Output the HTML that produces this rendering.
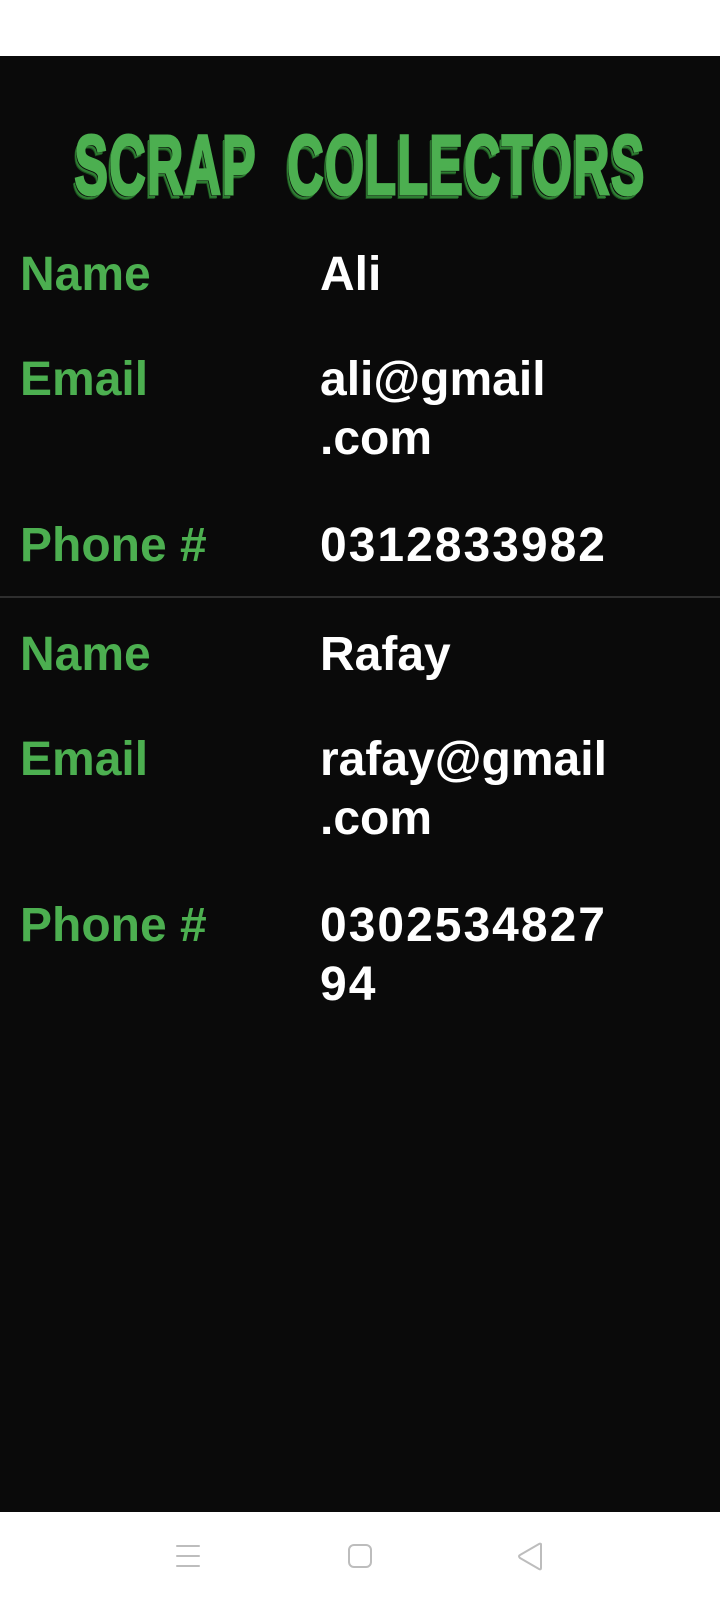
<!DOCTYPE html>
<html><head><meta charset="utf-8"><style>
*{margin:0;padding:0;box-sizing:border-box}
body{width:720px;height:1600px;background:#fff;position:relative;overflow:hidden;font-family:"Liberation Sans",sans-serif;font-weight:bold}
#main{position:absolute;left:0;top:56px;width:720px;height:1456px;background:#0a0a0a}
.t{position:absolute;font-size:48px;line-height:59px;white-space:nowrap}
.g{color:#4caf50;left:20px}
.w{color:#fff;left:320px}
.n{letter-spacing:2px}
#title{position:absolute;left:-300px;width:1320px;top:120px;text-align:center;font-size:84px;line-height:90px;white-space:nowrap;color:#4caf50;-webkit-text-stroke:3px #4caf50;transform:scaleX(.6);letter-spacing:2px;text-shadow:-2px 2px 0 #0a0a0a,-4px 4px 0 #2e7d32,-5px 5px 0 #1b4d1e}
#div{position:absolute;left:0;top:596px;width:720px;height:2px;background:#2e2e2e}
#nav{position:absolute;left:0;top:1512px;width:720px;height:88px;background:#fff}
</style></head><body>
<div id="main"></div>
<div id="title">SCRAP&nbsp; COLLECTORS</div>
<div class="t g" style="top:245px">Name</div>
<div class="t w" style="top:245px">Ali</div>
<div class="t g" style="top:350px">Email</div>
<div class="t w" style="top:350px">ali@gmail<br>.com</div>
<div class="t g" style="top:516px">Phone #</div>
<div class="t w n" style="top:516px">0312833982</div>
<div id="div"></div>
<div class="t g" style="top:625px">Name</div>
<div class="t w" style="top:625px">Rafay</div>
<div class="t g" style="top:730px">Email</div>
<div class="t w" style="top:730px">rafay@gmail<br>.com</div>
<div class="t g" style="top:896px">Phone #</div>
<div class="t w n" style="top:896px">0302534827<br>94</div>
<div id="nav">
<svg width="720" height="88" style="position:absolute;left:0;top:0" fill="none" stroke="#bdbdbd" stroke-width="2" stroke-linecap="round" stroke-linejoin="round">
<line x1="177" y1="34" x2="199" y2="34"/><line x1="177" y1="44" x2="199" y2="44"/><line x1="177" y1="54" x2="199" y2="54"/>
<rect x="349" y="33" width="22" height="22" rx="5"/>
<path d="M541 32 L541 56 Q541 58 539 57 L520 46 Q518 44 520 43 L539 32 Q541 31 541 33Z"/>
</svg>
</div>
</body></html>
